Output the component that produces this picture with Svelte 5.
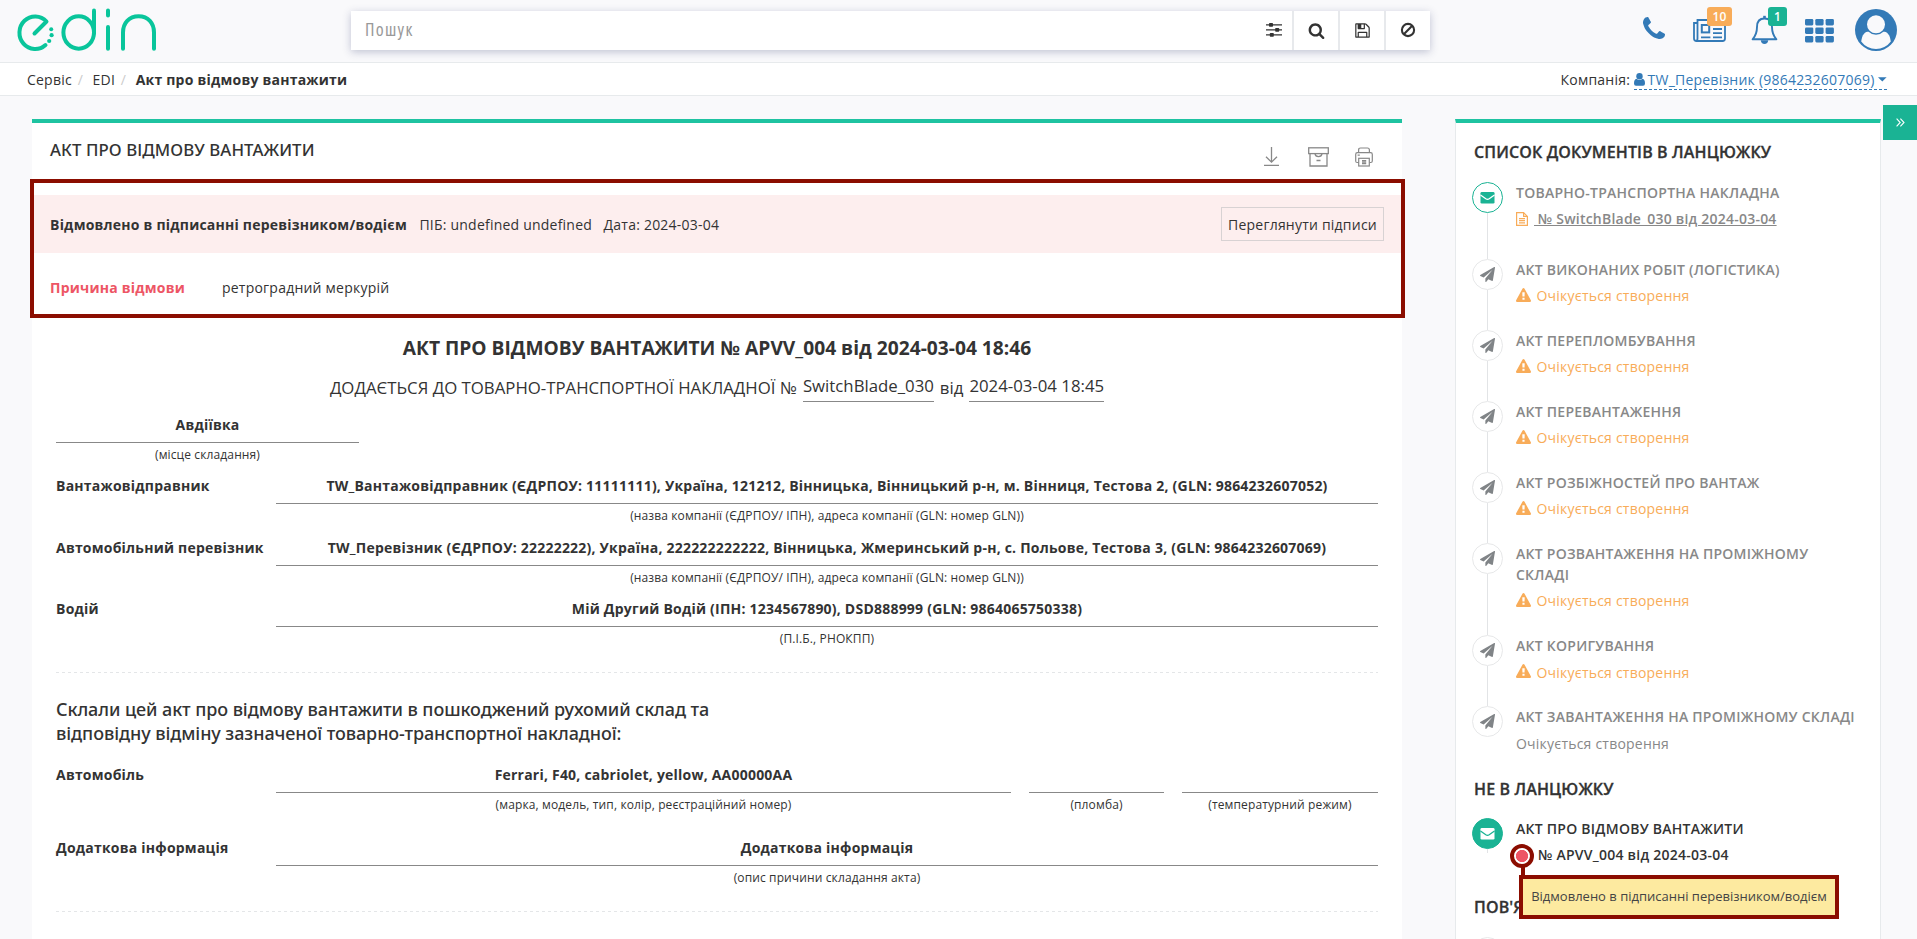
<script>
  const chain = [
    { title: 'АКТ ВИКОНАНИХ РОБІТ (ЛОГІСТИКА)', warn: true },
    { title: 'АКТ ПЕРЕПЛОМБУВАННЯ', warn: true },
    { title: 'АКТ ПЕРЕВАНТАЖЕННЯ', warn: true },
    { title: 'АКТ РОЗБІЖНОСТЕЙ ПРО ВАНТАЖ', warn: true },
    { title: 'АКТ РОЗВАНТАЖЕННЯ НА ПРОМІЖНОМУ СКЛАДІ', warn: true },
    { title: 'АКТ КОРИГУВАННЯ', warn: true },
    { title: 'АКТ ЗАВАНТАЖЕННЯ НА ПРОМІЖНОМУ СКЛАДІ', warn: false }
  ];
  const companyHint = '(назва компанії (ЄДРПОУ/ ІПН), адреса компанії (GLN: номер GLN))';
  const parties = [
    { label: 'Вантажовідправник', value: 'TW_Вантажовідправник (ЄДРПОУ: 11111111), Україна, 121212, Вінницька, Вінницький р-н, м. Вінниця, Тестова 2, (GLN: 9864232607052)', hint: companyHint, size: 62 },
    { label: 'Автомобільний перевізник', value: 'TW_Перевізник (ЄДРПОУ: 22222222), Україна, 222222222222, Вінницька, Жмеринський р-н, с. Польове, Тестова 3, (GLN: 9864232607069)', hint: companyHint, size: 61 },
    { label: 'Водій', value: 'Мій Другий Водій (ІПН: 1234567890), DSD888999 (GLN: 9864065750338)', hint: '(П.І.Б., РНОКПП)', size: 73 }
  ];
</script>

{#snippet plane()}
  <svg width="15" height="15" viewBox="0 0 1792 1792" fill="currentColor"><path d="M1764 11q33 24 27 64l-256 1536q-5 29-32 45-14 8-31 8-11 0-24-5l-453-185-242 295q-18 23-49 23-13 0-22-4-19-7-30.5-23.5t-11.5-36.5v-349l864-1059-1069 925-395-162q-37-14-40-55-2-40 32-59l1664-960q15-9 32-9 20 0 36 11z" /></svg>
{/snippet}
{#snippet envelope()}
  <svg width="15" height="15" viewBox="0 0 15 15"><rect x="0.5" y="2" width="14" height="11.5" rx="1.3" fill="currentColor" /><path class="flap" d="M0.5 5L5.8 8.8Q7.5 9.8 9.2 8.8L14.5 5" fill="none" /></svg>
{/snippet}
{#snippet warning()}
  <svg class="warn" width="15" height="15" viewBox="0 0 1792 1792" fill="currentColor"><path d="M1024 1375v-190q0-14-9.5-23.5t-22.5-9.5h-192q-13 0-22.5 9.5t-9.5 23.5v190q0 14 9.5 23.5t22.5 9.5h192q13 0 22.5-9.5t9.5-23.5zm-2-374l18-459q0-12-10-19-13-11-24-11h-220q-11 0-24 11-10 7-10 21l17 457q0 10 10 16.5t24 6.5h185q14 0 23.5-6.5t10.5-16.5zm-14-934l768 1408q35 63-2 126-17 29-46.5 46t-63.5 17h-1536q-34 0-63.5-17t-46.5-46q-37-63-2-126l768-1408q17-31 47-49t65-18 65 18 47 49z" /></svg>
{/snippet}

<div class="page">
  <header>
    <svg class="logo" width="144" height="56" viewBox="14 0 144 56" fill="none" stroke="#09c59b" stroke-width="4" stroke-linecap="round" stroke-linejoin="round">
      <path d="M34.5 33.5L46.5 21.5A15.700 16.300 0 1 0 45.500 45" />
      <ellipse cx="78.7" cy="32.5" rx="15.3" ry="16.2" /><path d="M94 10.5V33" />
      <path d="M108 10.5V15.5M108 27V48.8" />
      <path d="M123 48.8V32.5C123 23 129 16.3 138.6 16.3S154 23 154 32.5V48.8" />
      <g fill="#09c59b" stroke="none"><circle cx="51.2" cy="29.2" r="2" /><circle cx="51.6" cy="35.2" r="2.1" /><circle cx="49.2" cy="41" r="2.1" /></g>
    </svg>
    <div class="search">
      <input placeholder="Пошук" aria-label="Пошук" />
      <button class="tune" aria-label="Фільтри"><svg width="16" height="14" viewBox="0 0 16 14" fill="#333"><path d="M0 1.2h16v1.3H0zM0 6.2h16v1.3H0zM0 11.2h16v1.3H0z" /><rect x="3" y="0" width="4" height="3.8" rx=".7" /><rect x="9.2" y="5" width="4" height="3.8" rx=".7" /><rect x="3.8" y="10" width="4" height="3.8" rx=".7" /></svg></button>
      <button aria-label="Шукати"><svg width="17" height="17" viewBox="0 0 1792 1792" fill="#333"><path d="M1216 832q0-185-131.500-316.500t-316.500-131.500-316.500 131.500-131.500 316.500 131.500 316.500 316.500 131.500 316.500-131.500 131.500-316.500zm512 832q0 52-38 90t-90 38q-54 0-90-38l-343-342q-179 124-399 124-143 0-273.500-55.500t-225-150-150-225-55.500-273.500 55.500-273.500 150-225 225-150 273.500-55.500 273.500 55.500 225 150 150 225 55.500 273.500q0 220-124 399l343 343q37 37 37 90z" /></svg></button>
      <button aria-label="Зберегти"><svg width="17" height="17" viewBox="0 0 1792 1792" fill="#333"><path d="M512 1536h768v-384h-768v384zm896 0h128v-896q0-14-10-38.500t-20-34.500l-281-281q-10-10-34-20t-39-10v416q0 40-28 68t-68 28h-576q-40 0-68-28t-28-68v-416h-128v1280h128v-416q0-40 28-68t68-28h832q40 0 68 28t28 68v416zm-384-928v-320q0-13-9.500-22.500t-22.500-9.500h-192q-13 0-22.500 9.500t-9.500 22.500v320q0 13 9.500 22.500t22.500 9.500h192q13 0 22.500-9.500t9.500-22.500zm640 32v928q0 40-28 68t-68 28h-1344q-40 0-68-28t-28-68v-1344q0-40 28-68t68-28h928q40 0 88 20t76 48l280 280q28 28 48 76t20 88z" /></svg></button>
      <button aria-label="Очистити"><svg width="16" height="16" viewBox="0 0 16 16" fill="none" stroke="#333" stroke-width="2.1"><circle cx="8" cy="8" r="6.1" /><path d="M3.8 12.2L12.200 3.800" /></svg></button>
    </div>
    <div class="tools">
      <svg class="phone" width="28" height="28" viewBox="0 0 1792 1792" fill="#337ab7"><path d="M1600 1240q0 27-10 70.500t-21 68.500q-21 50-122 106-94 51-186 51-27 0-53-3.500t-57.500-12.500-47-14.500-55.500-20.500-49-18q-98-35-175-83-127-79-264-216t-216-264q-48-77-83-175-3-9-18-49t-20.500-55.500-14.500-47-12.500-57.500-3.500-53q0-92 51-186 56-101 106-122 25-11 68.500-21t70.500-10q14 0 21 3 18 6 53 76 11 19 30 54t35 63.500 31 53.500q3 4 17.500 25t21.500 35.500 7 28.500q0 20-28.500 50t-62 55-62 53-28.500 46q0 9 5 22.500t8.500 20.500 14 24 11.500 19q76 137 174 235t235 174q2 1 19 11.500t24 14 20.500 8.500 22.500 5q18 0 46-28.500t53-62 55-62 50-28.500q14 0 28.500 7t35.500 21.500 25 17.500q25 15 53.500 31t63.500 35 54 30q70 35 76 53 3 7 3 21z" /></svg>
      <div class="tool news">
        <svg width="33" height="24" viewBox="0 0 33 24" fill="none" stroke="#337ab7" stroke-width="1.800"><path d="M4.500 19.500V1H32V19.500Q32 22 29.500 22H3.500Q1 22 1 19.500V4H4.500V19.500Q4.500 22 2.800 22" /><rect x="8.800" y="6" width="7.400" height="7.400" stroke-width="2" /><path d="M8 18.400H17.400M20 6H29M20 10H29M20 14.200H29M20 18.400H29" /></svg>
        <span class="badge orange">10</span>
      </div>
      <div class="tool bell">
        <svg width="27" height="30" viewBox="0 0 27 30" fill="none" stroke="#337ab7" stroke-width="1.900"><path d="M13.500 3.500C8.500 3.500 6 7 6 12C6 18 4.500 21 1.600 24.300H25.400C22.500 21 21 18 21 12C21 7 18.500 3.500 13.500 3.500Z" stroke-linejoin="round" /><path d="M13.500 0.800V3.500" stroke-width="2.600" /><path d="M9.800 25.200H17.200Q16.800 29 13.500 29T9.800 25.200Z" fill="#337ab7" stroke="none" /></svg>
        <span class="badge green">1</span>
      </div>
      <svg class="grid" width="29" height="24" viewBox="0 0 29 24" fill="#337ab7">
        {#each [0, 10.3, 20.6] as x}{#each [0, 8.5, 17] as y}<rect {x} {y} width="8.300" height="6.400" rx="1.300" />{/each}{/each}
      </svg>
      <svg class="avatar" width="42" height="42" viewBox="0 0 42 42"><circle cx="21" cy="21" r="21" fill="#337ab7" /><path d="M6.200 32.500C7 25.500 10 22.400 14 22.400H28C32 22.400 35 25.500 35.800 32.500A18.300 18.300 0 0 1 6.200 32.500Z" fill="#f9f9fb" /><circle cx="21" cy="15.300" r="10.400" fill="#337ab7" /><circle cx="21" cy="15.300" r="9" fill="#f9f9fb" /></svg>
    </div>
  </header>

  <nav>
    <span>Сервіс</span><i>/</i><span>EDI</span><i>/</i><b>Акт про відмову вантажити</b>
    <div class="company">
      <span>Компанія:</span>
      <a href="#company"><svg width="11" height="13" viewBox="0 0 11 13" fill="#337ab7"><circle cx="5.500" cy="3.300" r="3.200" /><path d="M2.500 5.800Q5.500 8.300 8.500 5.800Q11 6.300 11 10.500Q11 12.800 9 12.800H2Q0 12.800 0 10.500Q0 6.300 2.500 5.800Z" /></svg><span>TW_Перевізник (9864232607069)</span><svg width="9" height="5" viewBox="0 0 9 5" fill="#337ab7"><path d="M0 .2H8.600L4.300 4.600Z" /></svg></a>
    </div>
  </nav>

  <div class="body">
    <main>
      <div class="titlebar">
        <h1>АКТ ПРО ВІДМОВУ ВАНТАЖИТИ</h1>
        <div class="actions">
          <svg width="15" height="20" viewBox="0 0 15 20" fill="none" stroke="#888" stroke-width="1.300"><path d="M7.500 0V15M2 9.800L7.500 15.200L13 9.800M0 18.400H15" /></svg>
          <svg width="21" height="20" viewBox="0 0 21 20" fill="none" stroke="#888" stroke-width="1.300"><rect x=".7" y=".8" width="19.600" height="5.800" /><path d="M2 6.600V19H19V6.600M7 6.600Q7.400 9.600 10.500 9.600T14 6.600M8.500 13.500H12.500" /></svg>
          <svg width="18" height="20" viewBox="0 0 18 20" fill="none" stroke="#888" stroke-width="1.200"><path d="M3.600 5.500V3Q3.600 1 5.600 1H12.400Q14.400 1 14.400 3V5.500" /><path d="M3.600 15.500H2.200Q.7 15.500 .7 14V7.400Q.7 5.700 2.300 5.700H15.700Q17.300 5.700 17.300 7.400V14Q17.300 15.500 15.800 15.500H14.400" /><rect x="3.700" y="11.300" width="10.600" height="7.700" /><path d="M7 13.700H11.200M7 15.200H11.200M7 16.600H11.200M2.600 8.200H4.800" /></svg>
        </div>
      </div>

      <section class="rejection">
        <div class="alert">
          <b>Відмовлено в підписанні перевізником/водієм</b>
          <span>ПІБ: undefined undefined</span>
          <span class="date">Дата: 2024-03-04</span>
          <button>Переглянути підписи</button>
        </div>
        <div class="reason"><b>Причина відмови</b><span>ретроградний меркурій</span></div>
      </section>

      <h2>АКТ ПРО ВІДМОВУ ВАНТАЖИТИ № APVV_004 від 2024-03-04 18:46</h2>
      <p class="attached"><span>ДОДАЄТЬСЯ ДО ТОВАРНО-ТРАНСПОРТНОЇ НАКЛАДНОЇ №</span><u>SwitchBlade_030</u><span>від</span><u>2024-03-04 18:45</u></p>

      <div class="form">
        <div class="field place"><b>Авдіївка</b><small>(місце складання)</small></div>
        {#each parties as p}
          <div class="row" style="height: {p.size}px">
            <b class="label">{p.label}</b>
            <div class="field wide"><b>{p.value}</b><small>{p.hint}</small></div>
          </div>
        {/each}
        <hr />
        <h3>Склали цей акт про відмову вантажити в пошкоджений рухомий склад та<br />відповідну відміну зазначеної товарно-транспортної накладної:</h3>
        <div class="row vehicle">
          <b class="label">Автомобіль</b>
          <div class="field car"><b>Ferrari, F40, cabriolet, yellow, AA00000AA</b><small>(марка, модель, тип, колір, реєстраційний номер)</small></div>
          <div class="field seal"><b></b><small>(пломба)</small></div>
          <div class="field temp"><b></b><small>(температурний режим)</small></div>
        </div>
        <div class="row extra">
          <b class="label">Додаткова інформація</b>
          <div class="field wide"><b>Додаткова інформація</b><small>(опис причини складання акта)</small></div>
        </div>
        <hr />
      </div>
    </main>

    <aside>
      <h4>СПИСОК ДОКУМЕНТІВ В ЛАНЦЮЖКУ</h4>
      <div class="item first">
        <div class="rail"><span class="dot open">{@render envelope()}</span></div>
        <div class="info">
          <b>ТОВАРНО-ТРАНСПОРТНА НАКЛАДНА</b>
          <div class="sub doc"><svg width="12" height="14" viewBox="0 0 12 14" fill="none" stroke="#f8ac59" stroke-width="1.200"><path d="M.6 .6H7.600L11.400 4.400V13.400H.6ZM7.600 .6V4.400H11.400M3 6.600H9M3 8.700H9M3 10.800H9" /></svg><a href="#ttn">&nbsp;№ SwitchBlade_030 від 2024-03-04</a></div>
        </div>
      </div>
      {#each chain as c, i}
        <div class="item" class:last={i === chain.length - 1}>
          <div class="rail"><span class="dot">{@render plane()}</span></div>
          <div class="info">
            <b>{c.title}</b>
            <div class="sub" class:pending={c.warn}>{#if c.warn}{@render warning()}{/if}<span>Очікується створення</span></div>
          </div>
        </div>
      {/each}
      <h4 class="outside">НЕ В ЛАНЦЮЖКУ</h4>
      <div class="item current">
        <div class="rail"><span class="dot full">{@render envelope()}</span></div>
        <div class="info">
          <b>АКТ ПРО ВІДМОВУ ВАНТАЖИТИ</b>
          <div class="sub"><b>№ APVV_004 від 2024-03-04</b></div>
          <span class="status"></span>
          <span class="stem"></span>
          <div class="tooltip">Відмовлено в підписанні перевізником/водієм</div>
        </div>
      </div>
      <h4 class="related">ПОВ'Я</h4>
      <div class="item"><div class="rail"><span class="dot"></span></div></div>
    </aside>
    <button class="toggle" aria-label="Згорнути"><svg width="9" height="9" viewBox="0 0 9 9" fill="none" stroke="#fff" stroke-width="1.100"><path d="M.6 .7L4.200 4.500L.6 8.300M4.400 .7L8 4.500L4.400 8.300" /></svg></button>
  </div>
</div>

<style>
  :global(body) { margin: 0; overflow: hidden; }
  * { box-sizing: border-box; }
  svg { display: block; flex: none; }
  button { padding: 0; margin: 0; border: 0; background: none; font: inherit; color: inherit; letter-spacing: inherit; }
  h1, h2, h3, h4, p { margin: 0; letter-spacing: 0; }
  .page { width: 1917px; height: 939px; overflow: hidden; background: #f9f9fb; color: #333; font: 14px/20px "Open Sans", "Noto Sans", sans-serif; letter-spacing: .22px; }

  header { height: 63px; border-bottom: 1px solid #e7eaec; display: flex; align-items: flex-start; padding-left: 14px; }
  .logo { margin-right: 193px; }
  .search { width: 1079px; height: 39px; margin-top: 11px; display: flex; background: #fff; box-shadow: 0 2px 8px rgba(60, 70, 120, .3); }
  input { flex: 1; min-width: 0; border: 0; outline: 0; background: none; padding: 0 14px 3px; color: #333; font: 18px "Open Sans", sans-serif; font-stretch: 84%; letter-spacing: 1.300px; }
  input::placeholder { color: #999; opacity: 1; }
  .search button { width: 46px; display: flex; align-items: center; justify-content: center; border-left: 2px solid #e7e9ec; padding-bottom: 1px; }
  .search .tune { width: 36px; border: 0; padding-right: 1px; }
  .tools { display: flex; align-items: flex-start; margin-left: 210px; }
  .phone { margin: 15px 2px 0 0; }
  .tool { position: relative; }
  .news { margin: 19px 0 0 23px; }
  .bell { margin: 15px 0 0 25px; }
  .grid { margin: 19px 0 0 27px; }
  .avatar { margin: 9px 0 0 21px; }
  .badge { position: absolute; height: 19px; border-radius: 3px; color: #fff; font: 600 12px/19px "Open Sans", sans-serif; text-align: center; }
  .orange { left: 14px; top: -12px; width: 25px; background: #f8ac59; }
  .green { left: 17px; top: -8px; width: 19px; background: #1ab394; }

  nav { height: 33px; background: #fff; border-bottom: 1px solid #e7eaec; display: flex; align-items: center; padding: 1px 30px 0 27px; }
  nav i { font-style: normal; color: #ccc; padding: 0 9.500px 0 5.800px; }
  .company { margin-left: auto; display: flex; }
  .company a { display: flex; align-items: center; height: 20px; color: #337ab7; text-decoration: none; border-bottom: 1px dashed #337ab7; line-height: 19px; margin-left: 3.500px; }
  .company a span { margin: 0 3.500px 0 3px; }

  .body { display: flex; align-items: flex-start; }
  main { width: 1370px; height: 820px; margin: 23px 53px 0 32px; background: #fff; border-top: 4px solid #1fc3a1; }
  .titlebar { height: 56px; padding: 17px 29px 0 18px; display: flex; justify-content: space-between; }
  h1 { font: 500 16.800px/20px "Noto Sans", "Open Sans", sans-serif; letter-spacing: .08px; }
  .actions { display: flex; padding-top: 7px; }
  .actions svg { margin-left: 29px; }
  .actions svg:last-child { margin-left: 26px; }
  .rejection { width: 1375px; height: 139px; margin-left: -2px; border: 4px solid #8b0d00; padding-top: 12px; }
  .alert { height: 58px; background: #fdeeee; display: flex; align-items: center; padding: 1px 17px 0 16px; }
  .alert > span { margin-left: 12.500px; }
  .alert > .date { margin-left: 11.500px; }
  .alert button { margin-left: auto; width: 163px; height: 34px; margin-top: -1px; padding-top: 1px; border: 1px solid #d8d2d3; }
  .reason { display: flex; padding: 25px 16px 0; }
  .reason b { width: 172px; color: #ed5565; }
  h2 { margin-top: 18px; font-size: 19.200px; line-height: 24px; font-weight: 700; text-align: center; }
  .attached { display: flex; justify-content: center; align-items: flex-start; font-size: 16.800px; line-height: 20px; height: 55px; padding-top: 16px; }
  .attached span { padding-top: 2px; }
  .attached u { text-decoration: none; border-bottom: 1px solid #888; height: 26px; margin: 0 6px; }
  .attached u:last-child { margin-right: 0; }

  .form { padding: 0 24px; }
  .row { display: flex; }
  .label { width: 220px; padding-top: 0; white-space: nowrap; }
  .field { display: flex; flex-direction: column; text-align: center; }
  .field b { height: 28px; border-bottom: 1px solid #888; white-space: nowrap; }
  .field small { font-size: 12px; line-height: 24px; letter-spacing: .125px; }
  .place { width: 303px; height: 61px; }
  .wide { width: 1102px; }
  hr { border: 0; margin: 0; height: 1px; width: 1322px; background: repeating-linear-gradient(90deg, #e4e6e8 0 3px, transparent 3px 6px); }
  h3 { font: 500 18px/24px "Noto Sans", "Open Sans", sans-serif; letter-spacing: -.08px; margin: 24px 0 20px; }
  .vehicle { height: 73px; }
  .extra { height: 73px; }
  .car { width: 735px; }
  .seal { width: 135px; margin: 0 18px; }
  .temp { width: 196px; }

  aside { width: 426px; height: 820px; margin: 23px 2px 0 0; background: #fff; border: 1px solid #e7eaec; border-top: 4px solid #1fc3a1; border-bottom: 0; padding: 19px 16px 0 15px; }
  h4 { font-size: 16px; line-height: 20px; height: 40px; padding-left: 3px; font-weight: 600; letter-spacing: .13px; -webkit-text-stroke: .3px #333; }
  .item { display: flex; height: auto; }
  .rail { width: 33px; margin-right: 12px; display: flex; flex-direction: column; align-items: center; }
  .rail::after { content: ''; flex: 1; width: 1px; background: #e2e4e6; }
  .dot { width: 31px; height: 31px; flex: none; border: 1px solid #e7e8e9; border-radius: 50%; display: flex; align-items: center; justify-content: center; color: #808487; background: #fff; }
  .open { border-color: #1ab394; color: #1ab394; }
  .full { border-color: #1ab394; background: #1ab394; color: #fff; }
  .flap { stroke: #fff; stroke-width: 1.300; }
  .full .flap { stroke: #1ab394; }
  .info { width: 343px; position: relative; padding-bottom: 23.600px; line-height: 21px; color: #888; }
  .info b { display: block; font-weight: 600; letter-spacing: .25px; }
  .first .info { padding-bottom: 29.600px; }
  .item .sub { display: flex; align-items: center; margin-top: 5.500px; height: 21px; }
  .item.first .sub { margin-top: 5px; }
  .last .rail::after { display: none; }
  .pending { color: #f8ac59; }
  .sub :global(.warn) { margin-right: 5.500px; margin-top: -1px; }
  .doc a { color: #888; font-weight: 600; margin-left: 6px; }
  .outside { margin-top: 1.700px; height: 39px; }
  .current { height: 35px; }
  .current .info { color: #333; }
  .current .info .sub { padding-left: 22px; }
  .status { position: absolute; left: -6px; top: 26px; width: 24px; height: 24px; border-radius: 50%; border: 4px solid #8b0d00; background: radial-gradient(circle, #ed5565 0 5.800px, #fff 6.400px); }
  .stem { position: absolute; left: 5px; top: 49px; width: 4px; height: 9px; background: #8b0d00; }
  .tooltip { position: absolute; left: 3px; top: 57px; width: 320px; height: 44px; border: 4px solid #8b0d00; background: #fdeaa0; color: #444; font-size: 13px; line-height: 35px; text-align: center; white-space: nowrap; z-index: 1; letter-spacing: 0; }
  .related { margin-top: 44px; height: 40px; }
  .toggle { width: 34px; height: 35px; margin-top: 9px; background: #1ab394; display: flex; align-items: center; justify-content: center; }
</style>
